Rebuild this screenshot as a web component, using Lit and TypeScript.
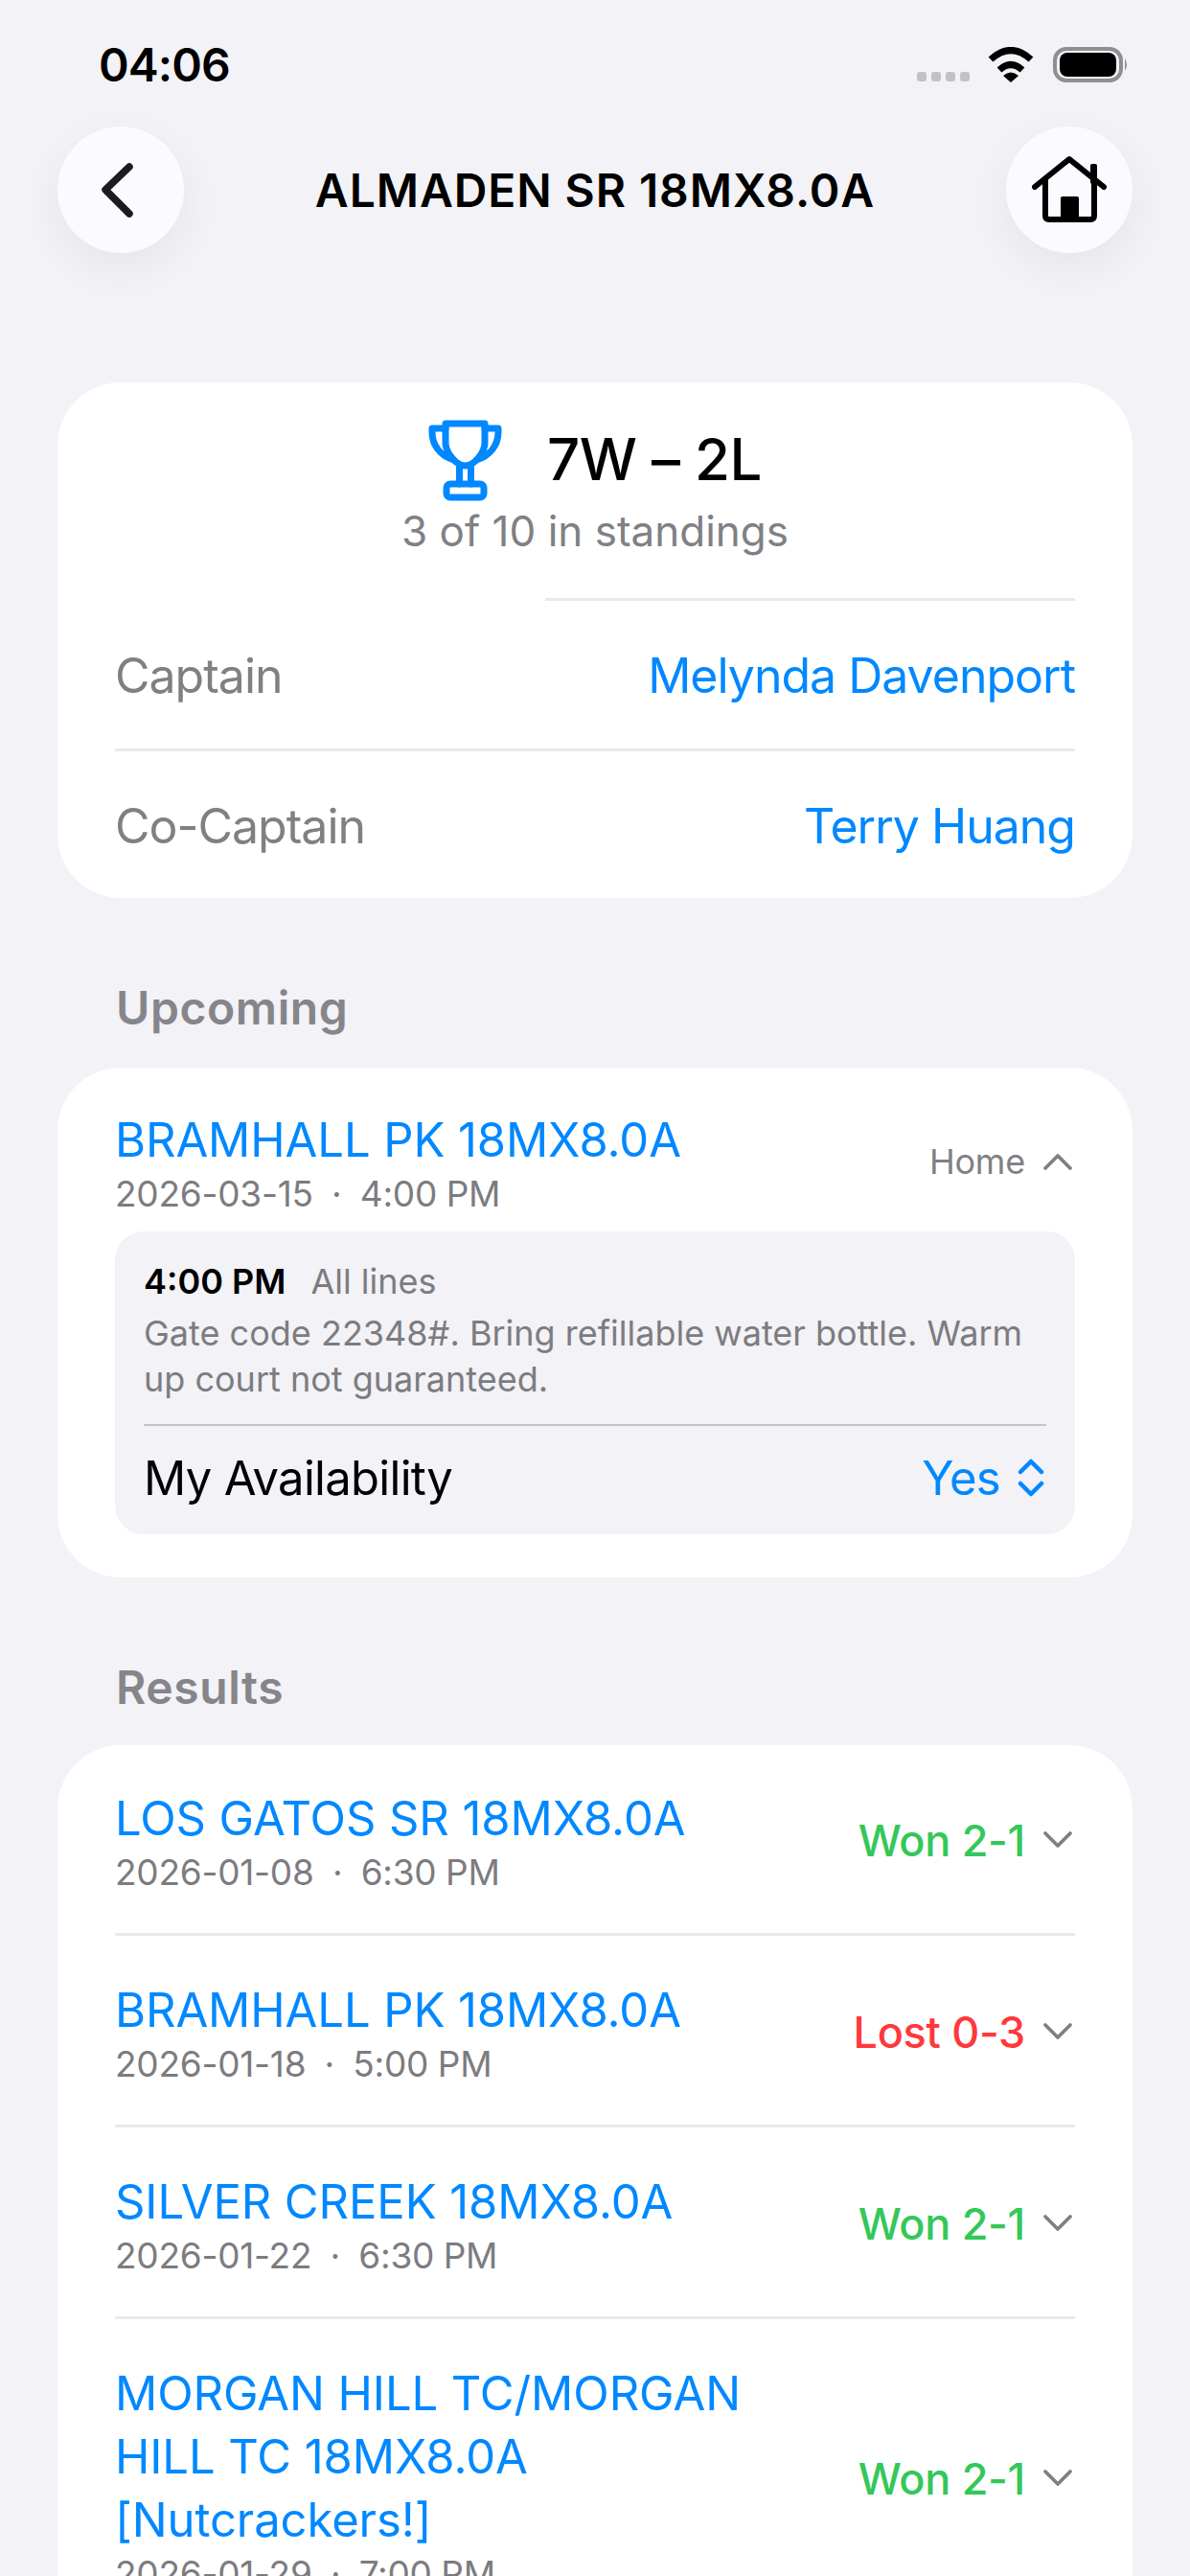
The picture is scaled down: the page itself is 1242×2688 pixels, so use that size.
import { LitElement, html, css } from "lit";
import { customElement } from "lit/decorators.js";

const chevDown = html`<svg class="chev" viewBox="0 0 32 20"><path d="M3 3 L16 16 L29 3" fill="none" stroke="#808080" stroke-width="3.8" stroke-linecap="round" stroke-linejoin="round"/></svg>`;
const chevUp = html`<svg class="chev" viewBox="0 0 32 20"><path d="M3 17 L16 4 L29 17" fill="none" stroke="#808080" stroke-width="3.8" stroke-linecap="round" stroke-linejoin="round"/></svg>`;

const results = [
  { t: "LOS GATOS SR 18MX8.0A", d: "2026-01-08", h: "6:30 PM", r: "Won 2-1", w: true },
  { t: "BRAMHALL PK 18MX8.0A", d: "2026-01-18", h: "5:00 PM", r: "Lost 0-3", w: false },
  { t: "SILVER CREEK 18MX8.0A", d: "2026-01-22", h: "6:30 PM", r: "Won 2-1", w: true },
  { t: "MORGAN HILL TC/MORGAN HILL TC 18MX8.0A [Nutcrackers!]", d: "2026-01-29", h: "7:00 PM", r: "Won 2-1", w: true },
];

@customElement("app-root")
export class AppRoot extends LitElement {
  static styles = css`
    :host { display: block; width: 1242px; height: 2688px; overflow: hidden; background: #f2f2f7; font-family: Inter, "Noto Sans", sans-serif; color: #000; }
    .status { height: 132px; box-sizing: border-box; padding: 41px 64px 0 103px; display: flex; justify-content: space-between; align-items: flex-start; }
    .time { font-size: 48px; font-weight: 600; line-height: 54px; letter-spacing: -0.9px; }
    .sys { display: block; margin-top: 8px; }
    .nav { height: 132px; padding: 0 60px; display: flex; align-items: center; justify-content: space-between; }
    .circle { width: 132px; height: 132px; border-radius: 50%; background: #fbfbff; box-shadow: 0 15px 48px rgba(0,0,0,.06); display: flex; align-items: center; justify-content: center; }
    .title { font-size: 48px; font-weight: 600; letter-spacing: 0.9px; }
    .card { background: #fff; margin: 0 60px; border-radius: 66px; padding: 0 60px; }
    .c1 { margin-top: 135px; height: 538px; box-sizing: border-box; padding-top: 39px; }
    .top { display: flex; flex-direction: column; align-items: center; }
    .score { display: flex; align-items: flex-start; gap: 47px; height: 85px; }
    .score b { font-size: 60px; font-weight: 500; line-height: 82px; letter-spacing: -0.5px; }
    .sub { font-size: 44px; color: #808084; line-height: 54px; margin-top: 4px; }
    .d1 { height: 3px; background: #e9e9eb; margin: 43px 0 0 449px; }
    .info { display: flex; justify-content: space-between; align-items: center; font-size: 50px; letter-spacing: -1px; padding-top: 2px; box-sizing: border-box; }
    .info .k { color: #808084; }
    .link { color: #0088ff; }
    .d2 { height: 3px; background: #e9e9eb; }
    .info.a { height: 154px; }
    .info.b { height: 153px; }
    .label { font-size: 48px; font-weight: 600; color: #85858a; margin: 85px 0 0 121px; line-height: 60px; height: 62px; letter-spacing: 0.6px; }
    .c2 { margin-top: 30px; height: 532px; box-sizing: border-box; padding-top: 41px; }
    .row { display: flex; justify-content: space-between; align-items: center; }
    .t { font-size: 49px; line-height: 66px; color: #0088ff; letter-spacing: -0.1px; margin: 2px 0 -2px; }
    .dt { font-size: 37px; color: #7c7c80; line-height: 50px; white-space: pre; letter-spacing: -0.25px; word-spacing: -0.5px; }
    .right { display: flex; align-items: center; gap: 18px; flex: none; margin-right: 2px; padding-bottom: 2px; }
    .home { font-size: 36px; color: #808084; margin-top: 0; letter-spacing: -0.2px; }
    .chev { width: 32px; height: 20px; display: block; }
    .inner { background: #f2f2f7; border-radius: 30px; margin-top: 14px; height: 316px; box-sizing: border-box; padding: 28px 30px 0; }
    .when { display: flex; align-items: baseline; gap: 26px; font-size: 36px; line-height: 48px; color: #7c7c80; }
    .when b { color: #000; font-weight: 600; }
    .note { font-size: 36px; line-height: 48px; color: #7c7c80; margin-top: 6px; }
    .d3 { height: 2px; background: #c4c4c8; margin-top: 23px; }
    .avail { display: flex; justify-content: space-between; align-items: center; height: 108px; font-size: 49px; letter-spacing: -0.7px; padding-right: 2px; }
    .yes { color: #0088ff; display: flex; align-items: center; gap: 18px; }
    .c3 { margin-top: 28px; padding-top: 42px; padding-bottom: 60px; }
    .r { display: flex; justify-content: space-between; align-items: center; padding: 0 0 38px; }
    .r + .r { border-top: 3px solid #e9e9eb; padding-top: 43px; }
    .r .l { width: 680px; }
    .res { font-size: 45px; font-weight: 550; letter-spacing: -0.3px; }
    .won { color: #34c759; }
    .lost { color: #ff383c; }
  `;

  render() {
    return html`
      <div class="status">
        <div class="time">04:06</div>
        <svg class="sys" width="221" height="37" viewBox="0 0 221 37">
          <g fill="#c2c2c6"><rect x="0" y="26" width="10" height="10" rx="3"/><rect x="15" y="26" width="10" height="10" rx="3"/><rect x="30" y="26" width="10" height="10" rx="3"/><rect x="45" y="26" width="10" height="10" rx="3"/></g>
          <g fill="none" stroke="#000" stroke-width="7"><path d="M77 13 Q98 -6 119 13"/><path d="M86 24 Q98 13 110 24"/></g>
          <path d="M90 30 Q98 23 106 30 L98 37 Z" fill="#000"/>
          <rect x="144" y="2" width="69" height="33" rx="12" fill="none" stroke="#8e8e93" stroke-width="4"/>
          <rect x="149" y="6" width="59" height="25" rx="8" fill="#000"/>
          <path d="M217 12 Q221 18.500 217 25 Z" fill="#8e8e93"/>
        </svg>
      </div>
      <div class="nav">
        <div class="circle">
          <svg width="44" height="66" viewBox="0 0 44 66"><path d="M31 9 L6 33 L31 58" fill="none" stroke="#1c1c1e" stroke-width="7.500" stroke-linecap="round" stroke-linejoin="round"/></svg>
        </div>
        <div class="title">ALMADEN SR 18MX8.0A</div>
        <div class="circle">
          <svg width="78" height="72" viewBox="0 0 78 72">
            <path d="M3 33 L39 4 L75 33" fill="none" stroke="#000" stroke-width="6" stroke-linecap="round" stroke-linejoin="round"/>
            <rect x="61" y="9" width="7" height="21" rx="2" fill="#000"/>
            <path d="M14 25 V63 Q14 67 18 67 H61 Q65 67 65 63 V25" fill="none" stroke="#000" stroke-width="6"/>
            <rect x="30" y="43" width="19" height="27" rx="2" fill="#000"/>
          </svg>
        </div>
      </div>

      <div class="card c1">
        <div class="top">
          <div class="score">
            <svg width="77" height="85" viewBox="0 0 77 85" fill="none" stroke="#0088ff" stroke-width="7" stroke-linejoin="round" stroke-linecap="round">
              <path d="M18 4 H59 V24 C59 34 48 48 38.500 48 C29 48 18 34 18 24 Z"/>
              <path d="M18 9 H4 V13 C4 27 13 37 24 41"/>
              <path d="M59 9 H73 V13 C73 27 64 37 53 41"/>
              <path d="M32.500 49 V67 M44.500 49 V67"/>
              <rect x="19" y="67" width="39" height="14" rx="4"/>
            </svg>
            <b>7W – 2L</b>
          </div>
          <div class="sub">3 of 10 in standings</div>
        </div>
        <div class="d1"></div>
        <div class="info a"><span class="k">Captain</span><span class="link">Melynda Davenport</span></div>
        <div class="d2"></div>
        <div class="info b"><span class="k">Co-Captain</span><span class="link">Terry Huang</span></div>
      </div>

      <div class="label">Upcoming</div>
      <div class="card c2">
        <div class="row">
          <div>
            <div class="t">BRAMHALL PK 18MX8.0A</div>
            <div class="dt">2026-03-15  ·  4:00 PM</div>
          </div>
          <div class="right"><span class="home">Home</span>${chevUp}</div>
        </div>
        <div class="inner">
          <div class="when"><b>4:00 PM</b><span>All lines</span></div>
          <div class="note">Gate code 22348#. Bring refillable water bottle. Warm up court not guaranteed.</div>
          <div class="d3"></div>
          <div class="avail"><span>My Availability</span>
            <span class="yes">Yes
              <svg width="28" height="40" viewBox="0 0 28 40" fill="none" stroke="#0088ff" stroke-width="4.500" stroke-linecap="round" stroke-linejoin="round"><path d="M3 14 L14 3 L25 14"/><path d="M3 26 L14 37 L25 26"/></svg>
            </span>
          </div>
        </div>
      </div>

      <div class="label results">Results</div>
      <div class="card c3">
        ${results.map((x) => html`
          <div class="r">
            <div class="l">
              <div class="t">${x.t}</div>
              <div class="dt">${x.d}  ·  ${x.h}</div>
            </div>
            <div class="right"><span class="res ${x.w ? "won" : "lost"}">${x.r}</span>${chevDown}</div>
          </div>`)}
      </div>
    `;
  }
}
